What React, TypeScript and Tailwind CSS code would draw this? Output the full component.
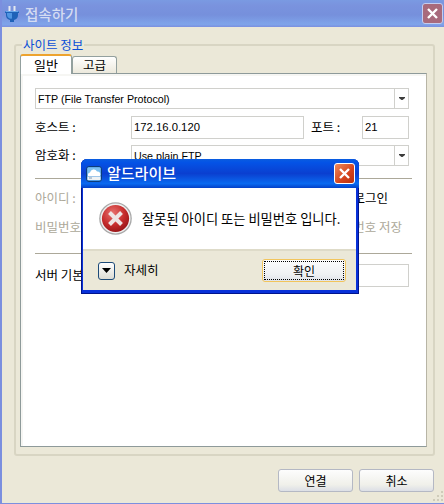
import React from 'react';

const fontStack = '[font-family:"Noto_Sans_CJK_KR","Liberation_Sans",sans-serif]';

const Field = ({ value, className }: { value?: string; className: string }) => (
  <div className={`flex items-center border border-[#d0d0cc] bg-white pl-[1px] text-[11.3px] text-black [font-family:"Liberation_Sans",sans-serif] ${className}`}>
    {value}
  </div>
);

const Combo = ({ value, className }: { value: string; className: string }) => (
  <div className={`flex h-[21px] items-center border border-[#d0d0cc] bg-white pl-[2px] text-[10.7px] text-black [font-family:"Liberation_Sans",sans-serif] ${className}`}>
    <span className="flex-1 pt-[1px]">{value}</span>
    <span className="flex h-full w-[14px] items-center justify-center border-l border-[#d0d0cc]">
      <svg width="6" height="3" viewBox="0 0 6 3"><path d="M0 0h6v1L3.5 3h-1L0 1z" fill="#3c3c3c" /></svg>
    </span>
  </div>
);

const PlugIcon = () => (
  <svg width="14" height="16" viewBox="0 0 14 16">
    <rect x="3.5" y="0" width="2" height="5" fill="#e4e8f0" />
    <rect x="8.5" y="0" width="2" height="5" fill="#e4e8f0" />
    <path d="M0 5h14v2h-1v2a5 5 0 0 1-4 5v2H5v-2a5 5 0 0 1-4-5V7H0z" fill="#1f62b8" />
    <path d="M2 7h5v5.5A4 4 0 0 1 2 9z" fill="#4f95e2" />
    <rect x="0.5" y="5" width="13" height="1" fill="#6aa8ea" />
  </svg>
);

const CloudIcon = () => (
  <svg width="16" height="16" viewBox="0 0 16 16">
    <rect x="0.5" y="0.5" width="15" height="15" rx="2.5" fill="#4f9ae0" stroke="#0d3d7a" />
    <rect x="1.5" y="1.5" width="13" height="7" rx="1" fill="#7cc0f0" />
    <path d="M2 10a2.5 2.5 0 0 1 2-3.5 3.8 3.8 0 0 1 7-1 3 3 0 0 1 3 4.5z" fill="#fff" />
    <rect x="1.5" y="10.5" width="13" height="3.5" fill="#eef2f4" />
    <rect x="3" y="11.5" width="3" height="1" fill="#7f9ab5" />
  </svg>
);

const ErrorIcon = () => (
  <svg width="33" height="33" viewBox="0 0 33 33">
    <defs>
      <radialGradient id="redBall" cx="0.4" cy="0.3" r="0.8">
        <stop offset="0" stopColor="#e8716f" />
        <stop offset="0.55" stopColor="#c52b2b" />
        <stop offset="1" stopColor="#8c0f12" />
      </radialGradient>
    </defs>
    <circle cx="16.5" cy="16.5" r="16.3" fill="#a8a8a8" />
    <circle cx="16.5" cy="16.5" r="15" fill="#f0f0f0" />
    <circle cx="16.5" cy="16.5" r="13.6" fill="url(#redBall)" />
    <path d="M10.5 10.5l12 12M22.5 10.5l-12 12" stroke="#eee4e4" strokeWidth="4" />
  </svg>
);

const CloseButton = ({ faded }: { faded?: boolean }) => (
  <div className={`flex h-[21px] w-[21px] items-center justify-center rounded-[3px] border ${faded ? 'border-[#c4cdf0] bg-[#a86a7c]' : 'border-white bg-[linear-gradient(135deg,#ee8a5c,#d4431c_60%,#b8300f)]'}`}>
    <svg width="13" height="13" viewBox="0 0 13 13">
      <path d="M2 2l9 9M11 2l-9 9" stroke="#fff" strokeWidth="2.4" />
    </svg>
  </div>
);

const XpButton = ({ label }: { label: string }) => (
  <button className="flex h-[23px] w-[75px] items-center justify-center rounded-[3px] border border-[#b4b8c4] bg-[linear-gradient(#fdfdfd,#f0f0ea_70%,#dcdfe6)] text-[12px] text-black">
    {label}
  </button>
);

const ErrorDialog = () => (
  <div className="absolute left-[79px] top-[159px] flex h-[135px] w-[278px] flex-col rounded-t-[6px] bg-[#0831d9] pb-[4px] pl-[2px] pr-[3px] shadow-[inset_-1px_-1px_0_#00138c,inset_1px_0_0_#00138c]">
    <div className="-ml-[2px] -mr-[3px] flex h-[29px] flex-none items-center rounded-t-[6px] bg-[linear-gradient(#0a5de0,#0453e6_12%,#0a3fd0_50%,#0a6af0_85%,#0440c8)] pl-[5px] pr-[4px]">
      <CloudIcon />
      <span className="ml-[5px] flex-1 text-[15px] font-medium text-white">알드라이브</span>
      <CloseButton />
    </div>
    <div className="flex h-[61px] flex-none items-center bg-white pl-[16px]">
      <ErrorIcon />
      <span className="ml-[10px] text-[13.25px] text-black">잘못된 아이디 또는 비밀번호 입니다.</span>
    </div>
    <div className="flex flex-1 items-center justify-between border-t-2 border-[#dedbc9] bg-[#ebe8d8] pl-[15px] pr-[10px]">
      <div className="flex items-center gap-[9px]">
        <span className="flex h-[18px] w-[17px] items-center justify-center rounded-[3px] border border-[#1c4a78] bg-[linear-gradient(#fff,#dcdcd4)]">
          <svg width="9" height="5" viewBox="0 0 9 5"><path d="M0 0h9L4.5 5z" fill="#000" /></svg>
        </span>
        <span className="text-[12.5px] text-black">자세히</span>
      </div>
      <div className="flex h-[23px] w-[84px] items-center justify-center rounded-[3px] border border-[#f2c55c] bg-[linear-gradient(#fdfdfd,#eef0f2_70%,#e0e3ea)] p-[1px]">
        <span className="flex h-full w-full items-center justify-center border border-dotted border-black text-[12px] text-black">확인</span>
      </div>
    </div>
  </div>
);

export default function App() {
  return (
    <div className={`relative flex h-[504px] w-[444px] flex-col overflow-hidden border-b border-l-[2px] border-[#7b8fdf] bg-[#ebe8d8] ${fontStack}`}>
      {/* inactive title bar */}
      <div className="-ml-[2px] flex h-[27px] flex-none items-center bg-[linear-gradient(#7a9ae2,#7a93de_20%,#7690dc_55%,#7fa4ea_90%,#7b8fdf)] pl-[5px] pr-[1px]">
        <PlugIcon />
        <span className="ml-[6px] flex-1 text-[14.5px] font-medium text-[#d4dcf2]">접속하기</span>
        <CloseButton faded />
      </div>

      <div className="flex flex-1 flex-col pl-[12px] pr-[9px] pt-[17px]">
        {/* site info group */}
        <div className="relative h-[412px] rounded-[3px] border-2 border-[#d8d5c3] pl-[4px] pr-[6px] pt-[8px]">
          <span className="absolute -top-[9px] left-[6px] bg-[#ebe8d8] px-[1px] text-[12.5px] leading-[15px] text-[#0a4fd6]">사이트 정보</span>
          <div className="flex h-[19px] items-end">
            <div className="z-10 -mb-[1px] flex h-[20px] w-[52px] items-center justify-center rounded-t-[3px] border-x border-[#93a09e] border-t-[2px] border-t-[#eda32e] bg-white text-[13px] text-black">일반</div>
            <div className="flex h-[17px] w-[45px] items-center justify-center rounded-t-[3px] border border-b-0 border-[#93a09e] bg-[linear-gradient(#fff,#ece9dc)] text-[12.5px] text-black">고급</div>
          </div>
          <div className="h-[374px] border border-[#8e9a9a] border-r-[#b8b5a6] bg-white pl-[14px] pt-[14px] shadow-[inset_2px_2px_0_#f6f6f3]">
            <Combo value="FTP (File Transfer Protocol)" className="w-[374px]" />
            <div className="mt-[7px] flex h-[23px] items-center">
              <span className="w-[96px] pb-[1px] text-[12.5px] text-black">호스트 :</span>
              <Field value="172.16.0.120" className="h-full w-[173px] pl-[2px]" />
              <span className="ml-[7px] w-[51px] pb-[1px] text-[12.5px] text-black">포트 :</span>
              <Field value="21" className="h-full w-[47px] pl-[2px]" />
            </div>
            <div className="mt-[6px] flex h-[21px] items-center">
              <span className="w-[96px] text-[12.5px] text-black">암호화 :</span>
              <Combo value="Use plain FTP" className="w-[278px]" />
            </div>
            <div className="mt-[12px] h-px w-[377px] bg-[#aca899]" />
            <div className="mt-[10px] flex h-[18px] w-[374px] items-center justify-between pr-[21px] text-[12.5px]">
              <span className="text-[#aca899]">아이디 :</span>
              <span className="text-black">익명 로그인</span>
            </div>
            <div className="mt-[11px] flex h-[18px] w-[374px] items-center justify-between pr-[7px] text-[12.5px] text-[#aca899]">
              <span>비밀번호 :</span>
              <span>비밀번호 저장</span>
            </div>
            <div className="mt-[17px] h-px w-[377px] bg-[#aca899]" />
            <div className="mt-[10px] flex h-[23px] w-[374px] items-center">
              <span className="w-[96px] text-[12.5px] text-black">서버 기본 폴더 :</span>
              <Field className="h-full w-[278px]" />
            </div>
          </div>
        </div>

        <div className="mt-[13px] flex justify-end gap-[6px] pr-[1px]">
          <XpButton label="연결" />
          <XpButton label="취소" />
        </div>
      </div>

      {/* resize grip */}
      <svg className="absolute bottom-[2px] right-[1px]" width="10" height="10" viewBox="0 0 10 10">
        <path d="M8 0h2v2H8zM4 4h2v2H4zM8 4h2v2H8zM0 8h2v2H0zM4 8h2v2H4zM8 8h2v2H8z" fill="#cfccba" />
      </svg>

      <ErrorDialog />
    </div>
  );
}
